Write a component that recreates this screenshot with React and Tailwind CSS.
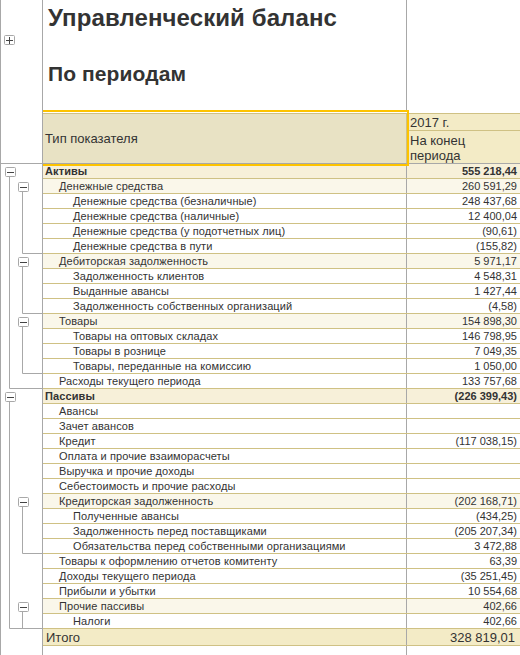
const rows = [
  { name: 'Активы', value: '555 218,44', level: 0, top: true },
  { name: 'Денежные средства', value: '260 591,29', level: 1, group: true },
  { name: 'Денежные средства (безналичные)', value: '248 437,68', level: 2 },
  { name: 'Денежные средства (наличные)', value: '12 400,04', level: 2 },
  { name: 'Денежные средства (у подотчетных лиц)', value: '(90,61)', level: 2 },
  { name: 'Денежные средства в пути', value: '(155,82)', level: 2 },
  { name: 'Дебиторская задолженность', value: '5 971,17', level: 1, group: true },
  { name: 'Задолженность клиентов', value: '4 548,31', level: 2 },
  { name: 'Выданные авансы', value: '1 427,44', level: 2 },
  { name: 'Задолженность собственных организаций', value: '(4,58)', level: 2 },
  { name: 'Товары', value: '154 898,30', level: 1, group: true },
  { name: 'Товары на оптовых складах', value: '146 798,95', level: 2 },
  { name: 'Товары в рознице', value: '7 049,35', level: 2 },
  { name: 'Товары, переданные на комиссию', value: '1 050,00', level: 2 },
  { name: 'Расходы текущего периода', value: '133 757,68', level: 1 },
  { name: 'Пассивы', value: '(226 399,43)', level: 0, top: true },
  { name: 'Авансы', value: '', level: 1 },
  { name: 'Зачет авансов', value: '', level: 1 },
  { name: 'Кредит', value: '(117 038,15)', level: 1 },
  { name: 'Оплата и прочие взаиморасчеты', value: '', level: 1 },
  { name: 'Выручка и прочие доходы', value: '', level: 1 },
  { name: 'Себестоимость и прочие расходы', value: '', level: 1 },
  { name: 'Кредиторская задолженность', value: '(202 168,71)', level: 1, group: true },
  { name: 'Полученные авансы', value: '(434,25)', level: 2 },
  { name: 'Задолженность перед поставщиками', value: '(205 207,34)', level: 2 },
  { name: 'Обязательства перед собственными организациями', value: '3 472,88', level: 2 },
  { name: 'Товары к оформлению отчетов комитенту', value: '63,39', level: 1 },
  { name: 'Доходы текущего периода', value: '(35 251,45)', level: 1 },
  { name: 'Прибыли и убытки', value: '10 554,68', level: 1 },
  { name: 'Прочие пассивы', value: '402,66', level: 1, group: true },
  { name: 'Налоги', value: '402,66', level: 2 },
];

// y координаты считаем от верха дерева (y=164 на странице)
const Box = ({ x, y, minus }) => (
  <g>
    <rect x={x + 0.5} y={y + 0.5} width="10" height="9" rx="1" fill="#fff" stroke="#a8a8a8" />
    <path d={minus ? `M${x + 2} ${y + 5.5}H${x + 9}` : `M${x + 2} ${y + 5.5}H${x + 9}M${x + 5.5} ${y + 2}V${y + 9}`} stroke="#444" fill="none" />
  </g>
);

const Bracket = ({ x, from, to }) => (
  <path d={`M${x + 0.5} ${from}V${to + 0.5}H43`} stroke="#a8a8a8" fill="none" />
);

const Tree = () => (
  <svg className="absolute left-0 top-0" width="43" height="491">
    <Bracket x={9} from={12} to={224} />
    <Bracket x={9} from={237} to={464} />
    <Bracket x={22} from={27} to={89} />
    <Bracket x={22} from={102} to={149} />
    <Bracket x={22} from={162} to={209} />
    <Bracket x={22} from={342} to={389} />
    <Bracket x={22} from={447} to={464} />
    <Box x={5} y={3} minus />
    <Box x={18} y={18} minus />
    <Box x={18} y={93} minus />
    <Box x={18} y={153} minus />
    <Box x={5} y={228} minus />
    <Box x={18} y={333} minus />
    <Box x={18} y={438} minus />
  </svg>
);

const Row = ({ row }) => {
  const bg = row.top ? 'bg-[#f7f0d9]' : row.group ? 'bg-[#faf7ea]' : 'bg-white';
  const pad = row.level === 0 ? 'pl-[2px]' : row.level === 1 ? 'pl-[16px]' : 'pl-[30px]';
  return (
    <div className={`flex h-[15px] border-b border-[#cfc184] text-[11px] leading-[14px] ${bg} ${row.top ? 'font-bold' : ''}`}>
      <div className={`w-[364px] shrink-0 whitespace-nowrap border-r border-[#a8a8a8] tracking-[0.1px] ${pad}`}>{row.name}</div>
      <div className="flex-1 pr-[3px] text-right whitespace-nowrap">{row.value}</div>
    </div>
  );
};

export default function App() {
  return (
    <div className="flex h-[655px] w-[520px] overflow-hidden bg-white font-['Liberation_Sans',Arial,sans-serif] text-[#333]">
      <div className="relative flex w-[43px] shrink-0 flex-col border-r border-l border-[#a8a8a8]">
        <div className="relative h-[164px] shrink-0 border-b border-[#a8a8a8]">
          <svg className="absolute left-[3px] top-[35px]" width="12" height="11">
            <Box x={0} y={0} />
          </svg>
        </div>
        <div className="relative -ml-px flex-1">
          <Tree />
        </div>
      </div>
      <div className="min-w-0 flex-1">
        <div className="flex h-[110px]">
          <div className="w-[364px] shrink-0 border-r border-[#a8a8a8] pl-[5px] text-[24px] font-bold leading-[26px] tracking-[0.1px]">
            <h1 className="pt-[5px]">Управленческий баланс</h1>
            <h2 className="pt-[30px] text-[21px]">По периодам</h2>
          </div>
        </div>
        <div className="relative flex h-[54px] border-b border-[#a8a8a8] pt-[3px]">
          <div className="flex w-[364px] shrink-0 items-center border-t border-r border-[#cfc184] bg-[#e8e2c4] pl-[2px] text-[13px]">
            Тип показателя
          </div>
          <div className="flex-1 bg-[#f3ebc6] text-[13px]">
            <div className="h-[18px] border-t border-b border-[#cfc184] pl-[3px] leading-[17px]">2017 г.</div>
            <div className="pl-[3px] pt-[2px] leading-[15px]">На конец<br />периода</div>
          </div>
          <div className="absolute -bottom-[3px] left-0 right-0 top-0 mr-[111px] border-t-2 border-r-2 border-b-2 border-[#fdc300]" />
        </div>
        {rows.map((r) => <Row key={r.name} row={r} />)}
        <div className="flex h-[17px] border-b border-[#cfc184] bg-[#f3ebc6] text-[13px] leading-[17px]">
          <div className="w-[364px] shrink-0 border-r border-[#a8a8a8] pl-[3px]">Итого</div>
          <div className="flex-1 pr-[5px] text-right">328 819,01</div>
        </div>
        <div className="h-[10px] w-[364px] border-r border-[#a8a8a8]" />
      </div>
    </div>
  );
}
